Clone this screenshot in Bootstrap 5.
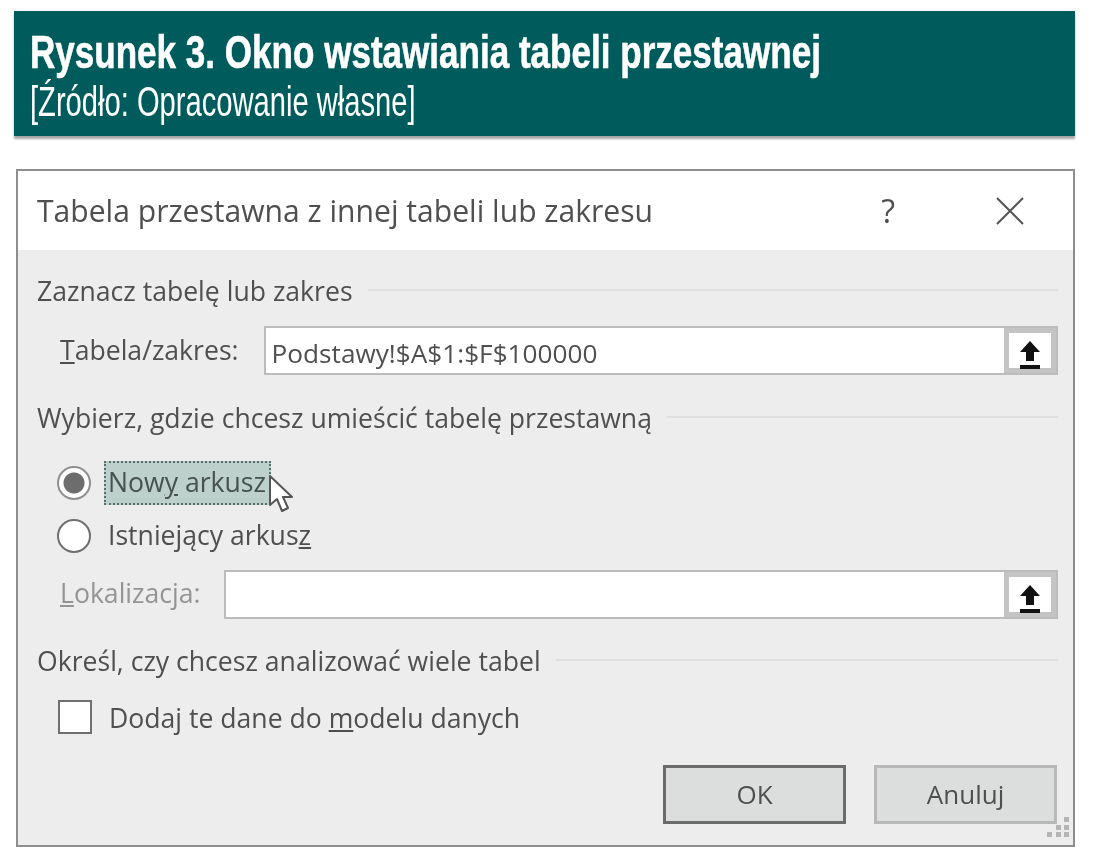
<!DOCTYPE html>
<html lang="pl">

<head>
    <meta charset="UTF-8">
    <meta name="viewport" content="width=device-width, initial-scale=1.0">
    <title>Rysunek 3</title>
    <link href="https://cdn.jsdelivr.net/npm/bootstrap@5.3.3/dist/css/bootstrap.min.css" rel="stylesheet">
    <style>
        body {
            background: #fff;
            padding: 11px 18px 0 14px;
            overflow: hidden;
        }

        .fig-head {
            background: #005c5c;
            color: #fff;
            height: 125px;
            padding: 16px 16px 0;
            box-shadow: 0 3px 2px rgba(0, 0, 0, .35);
            font-family: "Liberation Sans", sans-serif;
            white-space: nowrap;
        }

        .fig-title,
        .fig-source {
            transform-origin: left center;
            filter: blur(.3px);
        }

        .fig-title {
            font-size: 46px;
            font-weight: 700;
            line-height: 50px;
            transform: scaleX(.762);
            -webkit-text-stroke: .6px #fff;
        }

        .fig-source {
            font-size: 42px;
            font-weight: 400;
            line-height: 44px;
            margin-top: 3px;
            transform: scaleX(.694);
        }

        .dlg {
            margin: 33px 0 0 2px;
            height: 678px;
            background: #ededed;
            border: 2px solid #8e8e8e;
            border-radius: 0;
            font-family: "Open Sans", sans-serif;
            font-size: 26.6px;
            color: #4f4f4f;
            position: relative;
            filter: blur(.5px);
        }

        .dlg-title {
            background: #fff;
            height: 79px;
            padding: 0 48px 0 19px;
            font-size: 30.1px;
        }

        .help-mark {
            font-size: 32px;
            margin-right: 100px;
        }

        .dlg-body {
            padding: 0 15px 0 19px;
        }

        .sect {
            height: 28px;
            gap: 15px;
            white-space: nowrap;
        }

        .sect::after {
            content: "";
            flex: 1;
            margin-top: -4px;
            border-top: 2px solid #e0e0e0;
        }

        .field-row {
            height: 49px;
        }

        .field-label {
            margin-left: 23px;
            margin-right: 25px;
            padding-bottom: 0;
            white-space: nowrap;
        }

        .muted-label {
            color: #949494;
            margin-right: 23px;
        }

        .field-box {
            flex: 1;
            height: 49px;
            background: #fff;
            border: 2px solid #bcbcbc;
        }

        .dlg .form-control {
            height: 45px;
            border: 0;
            border-radius: 0;
            padding: 4px 6px 0;
            background: transparent;
            color: #4f4f4f;
            font-size: 26.2px;
            font-family: "Open Sans", sans-serif;
        }

        .pick-btn {
            width: 52px;
            height: 45px;
            background: #fff;
            border: 5px solid #c4c4c4;
            border-radius: 0;
            padding: 0;
        }

        .opt-dot {
            width: 34px;
            height: 34px;
            margin: 0 0 0 20px;
            flex: none;
            background: #fff;
            border: 2px solid #6f6f6f;
            border-radius: 50%;
        }

        .opt-dot.on {
            border-color: #8f8f8f;
            background: radial-gradient(circle, #6d6d6d 0 10px, #fff 11px);
        }

        .opt-check {
            width: 34px;
            height: 34px;
            margin: -4px 0 0 21px;
            flex: none;
            background: #fff;
            border: 2px solid #6f6f6f;
        }

        .opt-focus {
            background: #bdd0cc;
            border: 2px dotted #55706c;
            height: 44px;
            margin-left: 13px;
            padding: 0 2px;
            width: 167px;
            white-space: nowrap;
            color: #46524f;
        }

        .opt-label {
            margin-left: 17px;
            white-space: nowrap;
        }

        .mouse-arrow {
            position: absolute;
            left: 250px;
            top: 303px;
        }

        .dlg-btn {
            width: 183px;
            height: 59px;
            background: #dcdddd;
            border: 3px solid #b8b8b8;
            border-radius: 0;
            color: #4f4f4f;
            font-size: 26px;
            font-family: "Open Sans", sans-serif;
            padding: 0;
        }

        .dlg-btn.is-default {
            border-color: #6b6b6b;
        }

        .resize-grip {
            position: absolute;
            right: 3px;
            bottom: 7px;
        }
    </style>
</head>

<body>
    <div class="fig-head">
        <div class="fig-title">Rysunek 3. Okno wstawiania tabeli przestawnej</div>
        <div class="fig-source">[Źródło: Opracowanie własne]</div>
    </div>

    <div class="card dlg">
        <div class="dlg-title d-flex align-items-center">
            <span class="flex-grow-1">Tabela przestawna z innej tabeli lub zakresu</span>
            <span class="help-mark">?</span>
            <svg width="30" height="30" viewBox="0 0 30 30">
                <path d="M2 2 28 28M28 2 2 28" stroke="#555" stroke-width="2" fill="none" />
            </svg>
        </div>
        <div class="dlg-body">
            <div class="sect d-flex align-items-center" style="margin-top:28px">Zaznacz tabelę lub zakres</div>

            <div class="field-row d-flex align-items-center" style="margin-top:20px">
                <span class="field-label"><u>T</u>abela/zakres:</span>
                <div class="field-box d-flex">
                    <input class="form-control" type="text" value="Podstawy!$A$1:$F$100000">
                    <button class="pick-btn flex-shrink-0" type="button">
                        <svg width="28" height="32" viewBox="0 0 28 32">
                            <path d="M14 2 24 13H18V22H10V13H4ZM4 26H24V30H4Z" fill="#111" />
                        </svg>
                    </button>
                </div>
            </div>

            <div class="sect d-flex align-items-center" style="margin-top:30px">Wybierz, gdzie chcesz umieścić tabelę przestawną</div>

            <div class="d-flex align-items-center" style="margin-top:28px">
                <span class="opt-dot on"></span>
                <span class="opt-focus d-flex align-items-center">Now<u>y</u>&nbsp;arkusz</span>
            </div>
            <div class="d-flex align-items-center" style="margin-top:11px">
                <span class="opt-dot"></span>
                <span class="opt-label">Istniejący arkus<u>z</u></span>
            </div>

            <div class="field-row d-flex align-items-center" style="margin-top:14px">
                <span class="field-label muted-label"><u>L</u>okalizacja:</span>
                <div class="field-box d-flex">
                    <input class="form-control" type="text">
                    <button class="pick-btn flex-shrink-0" type="button">
                        <svg width="28" height="32" viewBox="0 0 28 32">
                            <path d="M14 2 24 13H18V22H10V13H4ZM4 26H24V30H4Z" fill="#111" />
                        </svg>
                    </button>
                </div>
            </div>

            <div class="sect d-flex align-items-center" style="margin-top:29px">Określ, czy chcesz analizować wiele tabel</div>

            <div class="d-flex align-items-center" style="margin-top:23px">
                <span class="opt-check"></span>
                <span class="opt-label">Dodaj te dane do <u>m</u>odelu danych</span>
            </div>

            <div class="d-flex justify-content-end gap-4" style="margin-top:26px;padding-right:1px">
                <button class="btn dlg-btn is-default" type="button">OK</button>
                <button class="btn dlg-btn" type="button" style="margin-left:4px">Anuluj</button>
            </div>
        </div>

        <svg class="mouse-arrow" width="26" height="40" viewBox="0 0 26 40">
            <path d="M2 2V31L9 25 14 37 20 34 15 23H24Z" fill="#fff" stroke="#555" stroke-width="2" stroke-linejoin="round" />
        </svg>
        <svg class="resize-grip" width="24" height="22" viewBox="0 0 24 22">
            <path d="M18 1h5v5h-5zM10 9h5v5h-5zM18 9h5v5h-5zM1 16h5v5H1zM10 16h5v5h-5zM18 16h5v5h-5z" fill="#b5b5b5" />
        </svg>
    </div>
    <script src="https://cdn.jsdelivr.net/npm/bootstrap@5.3.3/dist/js/bootstrap.bundle.min.js"></script>
</body>

</html>
